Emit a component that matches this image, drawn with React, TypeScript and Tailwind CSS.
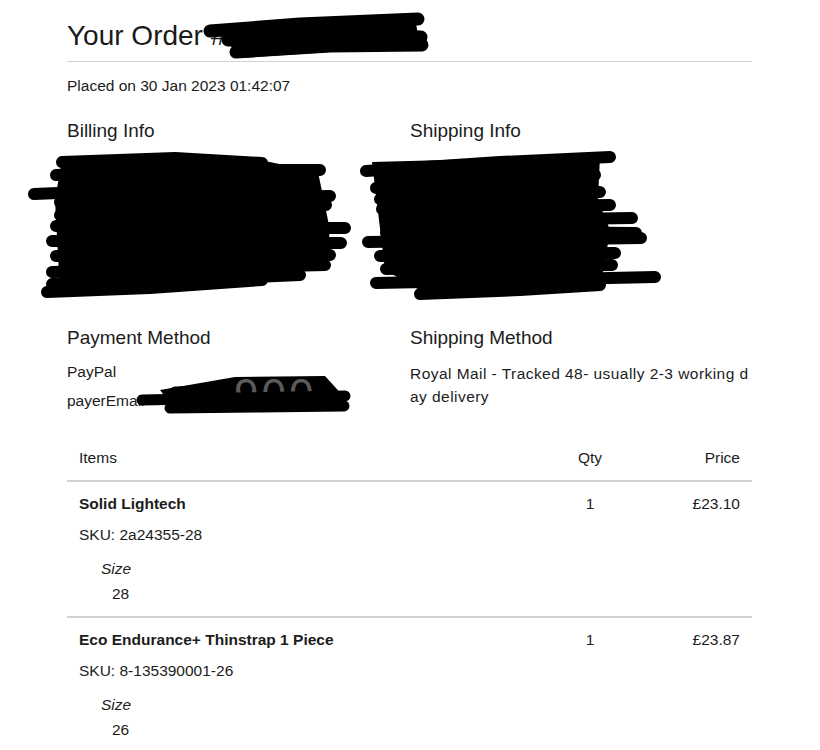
const font = { fontFamily: '"Liberation Sans", Arial, sans-serif' };

type Item = { name: string; sku: string; qty: number; price: string; size: string };

const items: Item[] = [
  { name: "Solid Lightech", sku: "2a24355-28", qty: 1, price: "£23.10", size: "28" },
  { name: "Eco Endurance+ Thinstrap 1 Piece", sku: "8-135390001-26", qty: 1, price: "£23.87", size: "26" },
];

function Scribbles() {
  const s = { stroke: "#000", strokeLinecap: "round" as const, strokeLinejoin: "round" as const, fill: "none" };
  return (
    <svg className="pointer-events-none absolute left-0 top-0" width="820" height="750" viewBox="0 0 820 750">
      {/* order number */}
      <polygon points="215,26 415,18 420,46 240,58" fill="#000" />
      <g {...s} strokeWidth="13">
        <path d="M210 31 L300 24 L418 19" />
        <path d="M228 40 L330 35 L421 37" />
        <path d="M236 52 L330 46 L422 45" />
      </g>

      {/* billing */}
      <polygon points="62,160 260,160 318,172 330,230 325,266 250,282 60,292 55,200" fill="#000" />
      <g {...s} strokeWidth="12">
        <path d="M62 162 L175 158 L262 163" />
        <path d="M56 175 L200 170 L320 170" />
        <path d="M34 194 L180 188 L312 183" />
        <path d="M60 202 L200 198 L330 196" />
        <path d="M60 215 L200 210 L326 205" />
        <path d="M56 226 L200 228 L345 228" />
        <path d="M52 241 L200 243 L341 243" />
        <path d="M56 256 L200 256 L330 255" />
        <path d="M52 272 L200 268 L325 265" />
        <path d="M52 284 L180 280 L300 275" />
        <path d="M47 292 L150 288 L262 280" />
      </g>

      {/* shipping */}
      <polygon points="372,162 600,156 598,200 610,230 605,262 600,285 430,296 385,270" fill="#000" />
      <g {...s} strokeWidth="12">
        <path d="M366 171 L500 162 L610 157" />
        <path d="M376 188 L500 180 L595 175" />
        <path d="M380 199 L500 195 L600 192" />
        <path d="M382 209 L500 206 L610 205" />
        <path d="M386 224 L500 220 L632 218" />
        <path d="M386 233 L520 232 L636 233" />
        <path d="M368 242 L500 240 L641 238" />
        <path d="M380 256 L500 254 L615 253" />
        <path d="M386 269 L500 267 L612 265" />
        <path d="M376 283 L520 280 L655 277" />
        <path d="M420 294 L520 290 L600 285" />
      </g>

      {/* payer email */}
      <polygon points="160,390 235,377 325,376 345,398 345,410 175,410" fill="#000" />
      <text x="234" y="410" fontSize="44" letterSpacing="3" fill="#5b5b5b" fontFamily="Liberation Sans, Arial, sans-serif">
        900
      </text>
      <g {...s} strokeWidth="11">
        <path d="M142 400 L240 398 L345 396" />
        <path d="M170 408 L260 407 L344 406" />
        <path d="M175 392 L230 391" />
      </g>
    </svg>
  );
}

export default function App() {
  return (
    <div className="relative w-[820px] min-h-[750px] overflow-hidden bg-white text-[#1c1c1c]" style={font}>
      <div className="pl-[67px] pr-[68px] pt-[19px]">
        <h1 className="text-[28px] leading-[34px] text-[#1a1a1a]">Your Order #</h1>
        <div className="mt-2 h-px bg-[#d2d2d2]" />
        <p className="mt-[14px] text-[15.5px] leading-[20px]">Placed on 30 Jan 2023 01:42:07</p>

        <div className="mt-[23px] grid grid-cols-[343px_1fr]">
          <div>
            <h2 className="text-[19px] leading-[24px]">Billing Info</h2>
            <div className="h-[183px]" />
          </div>
          <div>
            <h2 className="text-[19px] leading-[24px]">Shipping Info</h2>
            <div className="h-[183px]" />
          </div>

          <div>
            <h2 className="text-[19px] leading-[24px]">Payment Method</h2>
            <p className="mt-[12px] text-[15.5px] leading-[20px]">PayPal</p>
            <p className="mt-[9px] text-[15.5px] leading-[20px]">payerEmail</p>
          </div>
          <div>
            <h2 className="text-[19px] leading-[24px]">Shipping Method</h2>
            <p className="mt-[12px] w-[340px] break-all text-[15.5px] leading-[23px] tracking-[0.45px]">
              Royal Mail - Tracked 48- usually 2-3 working day delivery
            </p>
          </div>
        </div>

        <div className="mt-[25px] text-[15.5px] leading-[20px]">
          <div className="grid grid-cols-[1fr_80px_110px] border-b-2 border-[#d2d2d2] px-3 py-3">
            <span>Items</span>
            <span className="text-center">Qty</span>
            <span className="text-right">Price</span>
          </div>
          {items.map((item) => (
            <div key={item.sku} className="grid grid-cols-[1fr_80px_110px] border-b-2 border-[#d2d2d2] px-3 pb-3 pt-3 last:border-b-0">
              <div>
                <div className="font-bold">{item.name}</div>
                <div className="mt-[11px]">SKU: {item.sku}</div>
                <div className="mt-[14px] pl-[22px] italic">Size</div>
                <div className="mt-[5px] pl-[33px]">{item.size}</div>
              </div>
              <div className="text-center">{item.qty}</div>
              <div className="text-right">{item.price}</div>
            </div>
          ))}
        </div>
      </div>
      <Scribbles />
    </div>
  );
}
